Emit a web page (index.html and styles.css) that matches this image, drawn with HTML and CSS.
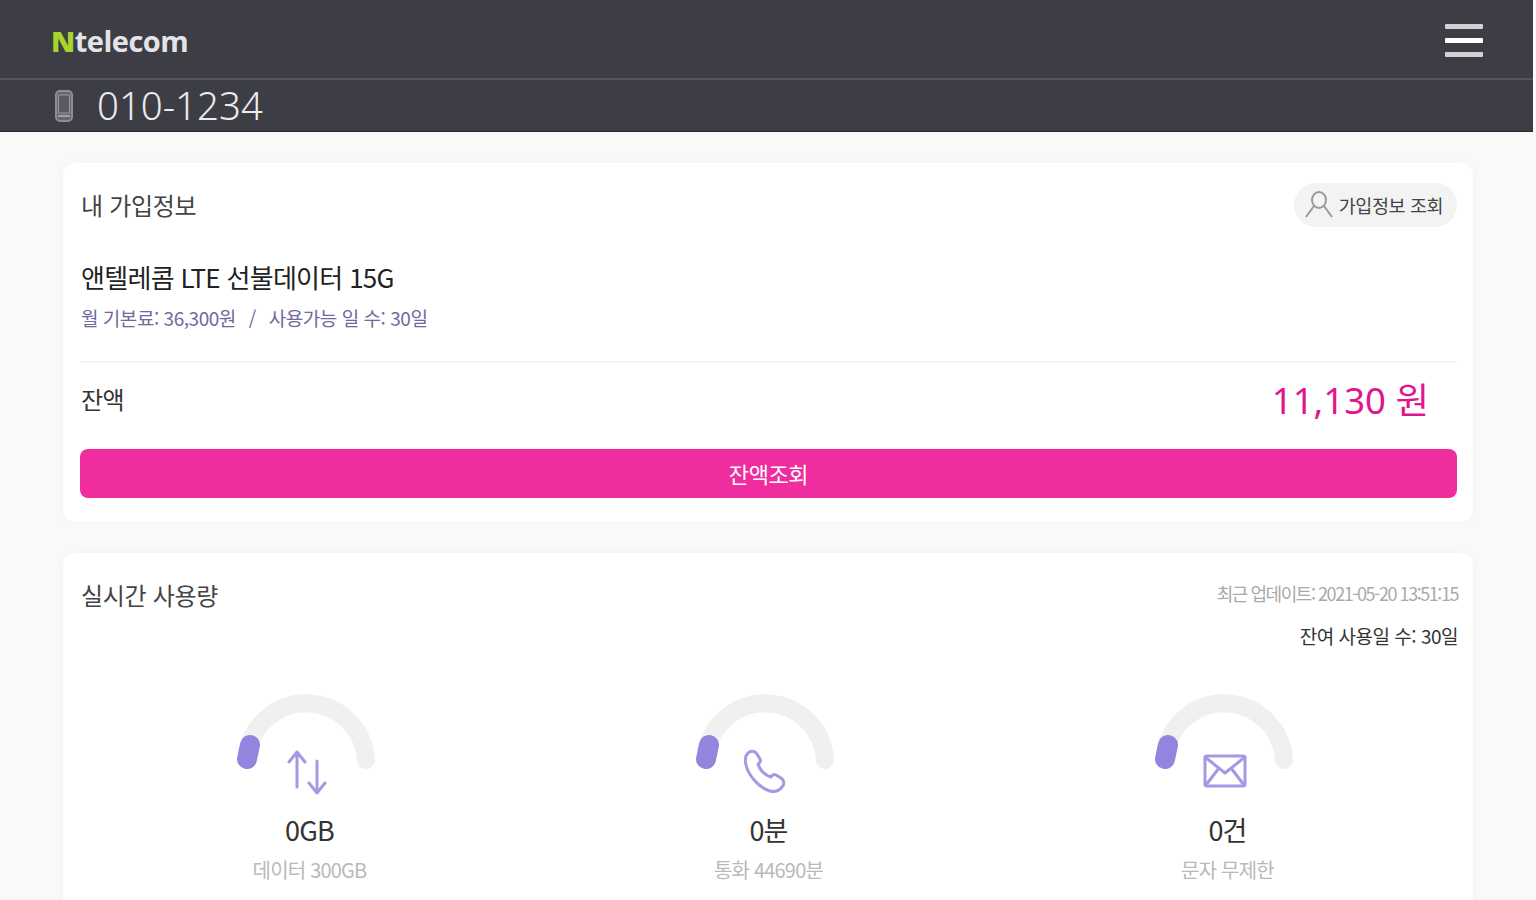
FILE: index.html
```html
<!DOCTYPE html>
<html lang="ko">
<head>
  <meta charset="UTF-8">
  <title>엔텔레콤 내 가입정보</title>
  <link rel="stylesheet" href="styles.css">
</head>
<body>

  <div class="page">
    <header class="header">
      <div class="header-top">
        <div class="logo"><span class="logo-n">N</span>telecom</div>
        <div class="menu-btn"><span></span><span class="mid"></span><span></span></div>
      </div>
      <div class="header-phone">
        <svg class="phone-icon" width="22" height="34" viewBox="0 0 22 34">
          <rect x="3" y="2" width="16" height="30" rx="4" fill="#66666c" stroke="#8e8e93" stroke-width="2"/>
          <rect x="5.5" y="6" width="11" height="18" fill="#5a5a61" stroke="#98989d" stroke-width="1"/>
          <path d="M5 27h12" stroke="#b4b4b8" stroke-width="1.5"/>
        </svg>
        <span class="phone-num">010-1234</span>
      </div>
    </header>

    <main class="content">
      <section class="card card-info">
        <div class="card-head">
          <h2 class="card-title">내 가입정보</h2>
          <button class="info-btn">
            <svg width="28" height="30" viewBox="0 0 28 30" fill="none" stroke="#9a9a9a" stroke-width="2">
              <ellipse cx="14" cy="10" rx="7" ry="8"/>
              <path d="M9 16 1 27M19 16l8 11"/>
            </svg>
            가입정보 조회
          </button>
        </div>
        <div class="plan-name">앤텔레콤 LTE 선불데이터 15G</div>
        <div class="plan-sub"><span>월 기본료: 36,300원</span><span>/</span><span>사용가능 일 수: 30일</span></div>
        <div class="balance-row">
          <span class="balance-label">잔액</span>
          <span class="balance-value">11,130 원</span>
        </div>
        <button class="balance-btn">잔액조회</button>
      </section>

      <section class="card card-usage">
        <div class="usage-head">
          <h2 class="card-title">실시간 사용량</h2>
          <div class="usage-meta">
            <div class="updated">최근 업데이트: 2021-05-20 13:51:15</div>
            <div class="remain">잔여 사용일 수: 30일</div>
          </div>
        </div>
        <div class="gauges">
          <div class="gauge">
            <svg class="gauge-svg" width="155" height="110" viewBox="0 0 155 110" fill="none">
              <path class="track" d="M15 65A60 60 0 0 1 134 72"/>
              <path class="bar" d="M18 57 15 71"/>
              <path class="ico" d="M65 99V64M57 74l8-10 8 10M85 73v32M77 95l8 10 8-10"/>
            </svg>
            <div class="gauge-value">0GB</div>
            <div class="gauge-label">데이터 300GB</div>
          </div>
          <div class="gauge">
            <svg class="gauge-svg" width="155" height="110" viewBox="0 0 155 110" fill="none">
              <path class="track" d="M15 65A60 60 0 0 1 134 72"/>
              <path class="bar" d="M18 57 15 71"/>
              <path class="ico" d="M57 65c3-3 7-2 9 1l3 5c1 2 0 4-2 5 2 6 7 11 13 13 1-2 3-3 5-2l5 3c3 2 4 6 1 9-3 4-8 5-12 4C69 100 58 89 55 77c-1-4-1-9 2-12Z"/>
            </svg>
            <div class="gauge-value">0분</div>
            <div class="gauge-label">통화 44690분</div>
          </div>
          <div class="gauge">
            <svg class="gauge-svg" width="155" height="110" viewBox="0 0 155 110" fill="none">
              <path class="track" d="M15 65A60 60 0 0 1 134 72"/>
              <path class="bar" d="M18 57 15 71"/>
              <rect class="ico" x="55" y="68" width="40" height="30" rx="2"/>
              <path class="ico" d="M55 69 75 85 95 69M56 97 69 80M94 97 81 80"/>
            </svg>
            <div class="gauge-value">0건</div>
            <div class="gauge-label">문자 무제한</div>
          </div>
        </div>
      </section>
    </main>
  </div>

</body>
</html>
```

FILE: styles.css
```css
* { box-sizing: border-box; margin: 0; padding: 0; }
html, body { height: 900px; overflow: hidden; }
body {
  font-family: "Noto Sans CJK KR", "Noto Sans", sans-serif;
  background: #f9f9f9;
  color: #333;
}
.page { width: 1533px; height: 900px; overflow: hidden; }

/* header */
.header { background: #3d3d46; height: 132px; border-bottom: 1px solid #26262c; }
.header-top {
  height: 80px;
  padding: 3px 50px 0 51px;
  border-bottom: 2px solid #56565e;
  display: flex;
  align-items: center;
  justify-content: space-between;
}
.logo {
  font-family: "Open Sans", sans-serif;
  font-weight: 700;
  font-size: 29px;
  letter-spacing: -0.5px;
  color: #e4e4e4;
  line-height: 1;
}
.logo-n { color: #a6d62c; font-weight: 800; }
.menu-btn { width: 38px; display: flex; flex-direction: column; gap: 9px; }
.menu-btn span { display: block; height: 5px; background: #d2d2d4; border-radius: 1px; }
.menu-btn .mid { background: #fff; }
.header-phone { display: flex; align-items: center; height: 51px; padding-left: 53px; gap: 22px; }
.phone-num { font-family: "Noto Sans", sans-serif; font-weight: 300; font-size: 38.4px; line-height: 1; color: #ececec; }

/* cards */
.content { padding: 31px 60px 0 63px; }
.card {
  background: #fff;
  border-radius: 12px;
  box-shadow: 0 0 8px rgba(0,0,0,0.03);
  padding: 20px 16px 24px 17px;
}
.card-info { height: 359px; }
.card-usage { margin-top: 31px; height: 400px; }
.card-title { font-size: 24px; font-weight: 400; letter-spacing: -0.3px; line-height: 44px; color: #444; padding-left: 1px; }

.card-head { display: flex; justify-content: space-between; align-items: center; }
.info-btn {
  height: 44px;
  width: 163px;
  border: none;
  border-radius: 22px;
  background: #f3f3f3;
  display: flex;
  align-items: center;
  justify-content: center;
  gap: 6px;
  padding-right: 3px;
  font-family: inherit;
  font-size: 18.5px;
  letter-spacing: -0.4px;
  color: #444;
}
.plan-name { margin-top: 32px; padding-left: 1px; font-size: 26px; line-height: 36px; letter-spacing: -0.7px; color: #222; }
.plan-sub {
  margin-top: 9px;
  padding: 0 0 29px 1px;
  border-bottom: 2px solid #f4f4f4;
  font-size: 19px;
  line-height: 28px;
  letter-spacing: -0.47px;
  color: #6c6a9e;
  display: flex;
  gap: 13px;
}
.balance-row { display: flex; justify-content: space-between; align-items: center; height: 70px; padding: 0 28px 0 1px; }
.balance-label { font-size: 24px; letter-spacing: -0.5px; color: #333; font-weight: 400; }
.balance-value { font-family: "Noto Sans", "Noto Sans CJK KR", sans-serif; font-size: 36.5px; color: #e0168e; }
.balance-btn {
  display: block;
  width: 100%;
  height: 49px;
  margin-top: 16px;
  padding-bottom: 2px;
  border: none;
  border-radius: 8px;
  background: #f02d9f;
  color: #fff;
  font-family: inherit;
  font-size: 22px;
  letter-spacing: -0.4px;
}

/* usage */
.usage-head { display: flex; justify-content: space-between; align-items: flex-start; }
.usage-meta { text-align: right; margin-right: -1px; }
.updated { font-size: 18px; line-height: 40px; letter-spacing: -1.45px; color: #a9a9a9; }
.remain { font-size: 19px; line-height: 46px; letter-spacing: -0.5px; color: #333; }
.gauges { display: grid; grid-template-columns: repeat(3, 1fr); margin-top: 29px; }
.gauge { display: flex; flex-direction: column; align-items: center; }
.gauge-svg { display: block; }
.track { stroke: #f0f0f0; stroke-width: 18; stroke-linecap: round; }
.bar { stroke: #9285dd; stroke-width: 20; stroke-linecap: round; }
.ico { stroke: #a698e4; stroke-width: 3; stroke-linejoin: round; stroke-linecap: round; }
.gauge-value { margin-top: 14px; font-size: 27px; line-height: 36px; letter-spacing: -0.8px; color: #333; font-weight: 400; }
.gauge-label { margin-top: 8px; font-size: 20px; line-height: 28px; letter-spacing: -0.8px; color: #b9b9b9; font-weight: 400; }
```
